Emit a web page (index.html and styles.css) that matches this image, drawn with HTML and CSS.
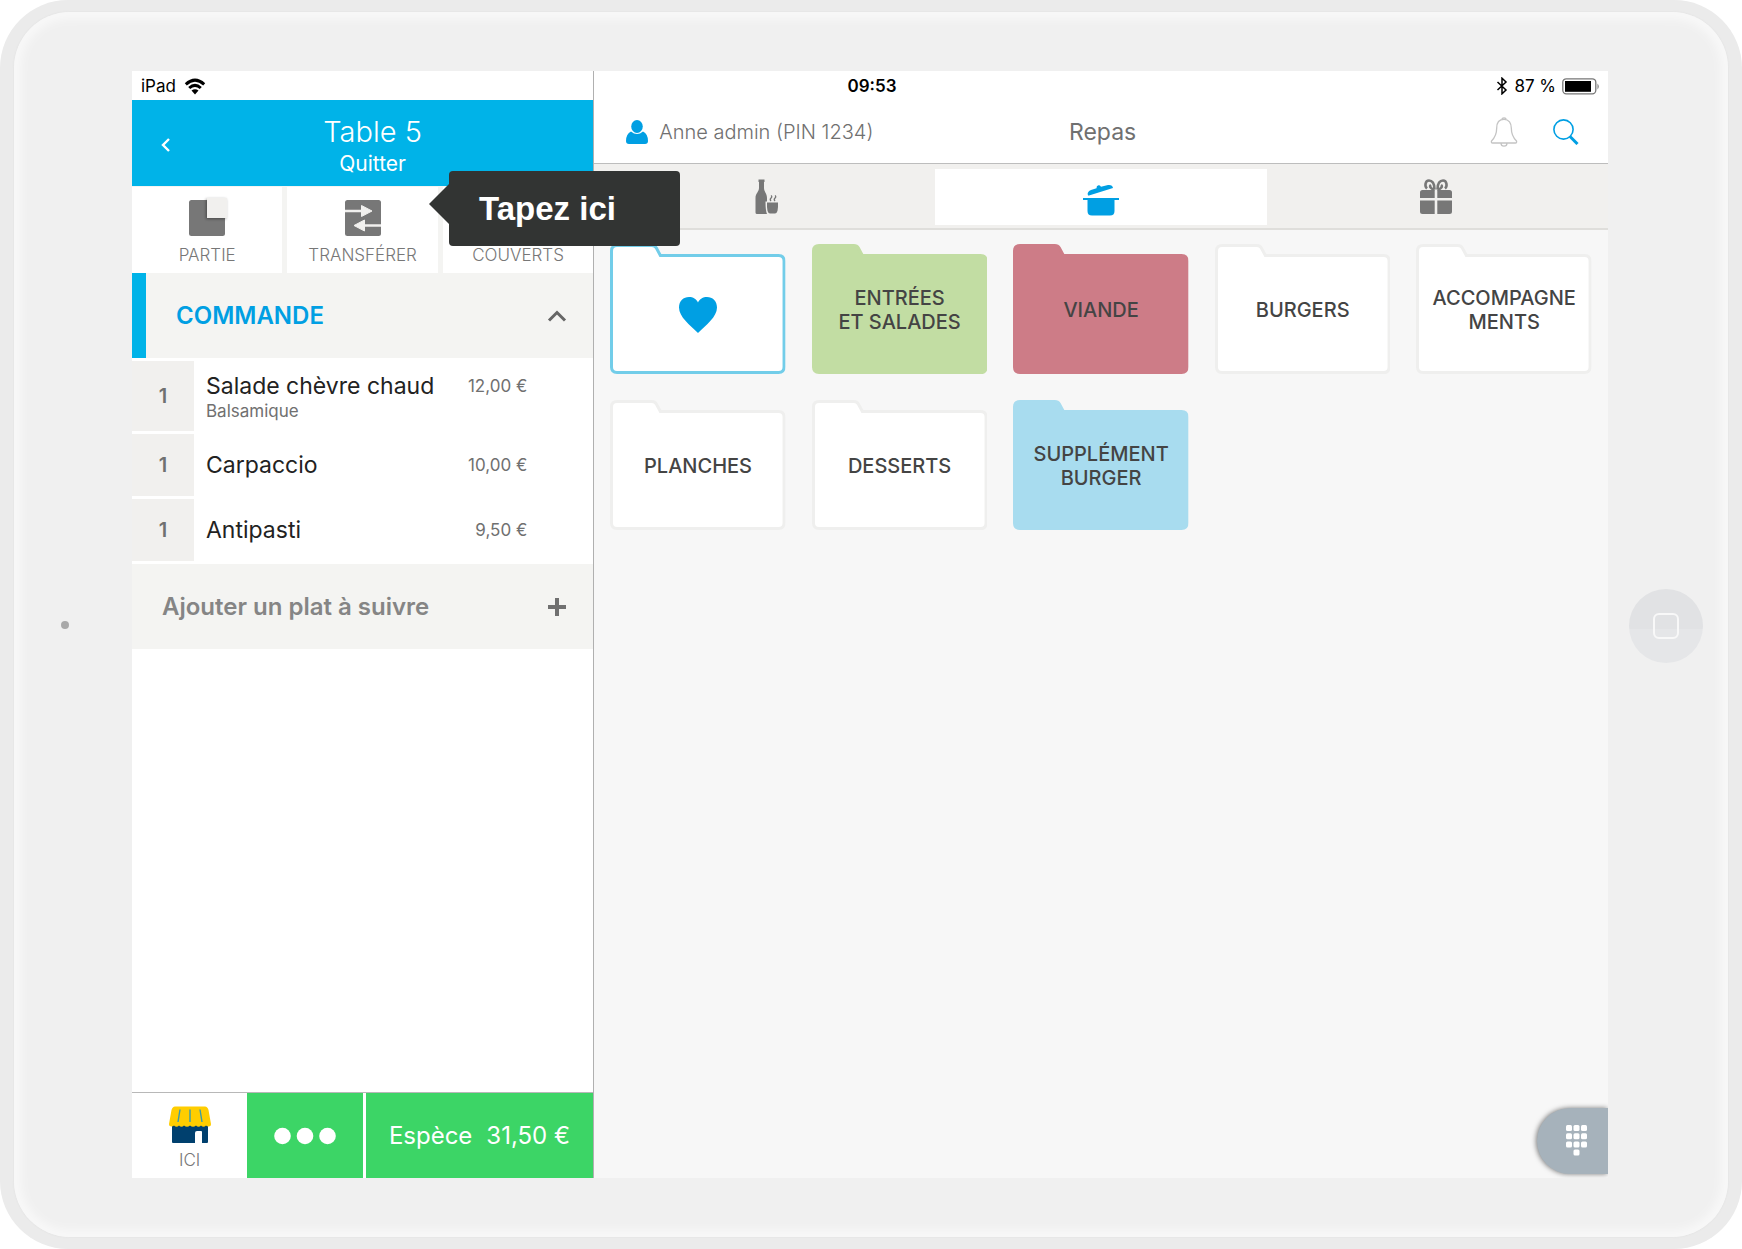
FILE: index.html
```html
<!DOCTYPE html>
<html lang="fr">
<head>
<meta charset="utf-8">
<meta name="viewport" content="width=device-width, initial-scale=1">
<title>Caisse – Table 5</title>
<link rel="stylesheet" href="styles.css">
</head>
<body>
<svg class="defs" aria-hidden="true">
  <symbol id="folder" viewBox="0 0 176 130" preserveAspectRatio="none">
    <path vector-effect="non-scaling-stroke" d="M7 1.5H42Q45 1.5 46.500 4L50.500 11.500H169Q174.500 11.500 174.500 17V123Q174.500 128.500 169 128.500H7Q1.500 128.500 1.500 123V7Q1.500 1.500 7 1.500Z"/>
  </symbol>
</svg>
<div class="device">
  <div class="body">
    <div class="bezel bezel-left"><span class="camera"></span></div>
    <main class="screen">
      <div class="status">
        <div class="status-left">iPad
          <svg width="22" height="17" viewBox="0 0 22 17" fill="none" stroke="#000" stroke-width="3"><path d="M1.800 6.300Q11-2 20.200 6.300M5.200 10Q11 4.800 16.800 10"/><path d="M11 16.500L7.500 12.600Q11 9.800 14.500 12.600Z" fill="#000" stroke="none"/></svg>
        </div>
        <time>09:53</time>
        <div class="status-right">
          <svg width="12" height="18" viewBox="0 0 12 18" fill="none" stroke="#000" stroke-width="1.500"><path d="M1.500 5L10 13L6 16.800V1.200L10 5L1.500 13"/></svg>
          <span>87 %</span>
          <svg width="38" height="17" viewBox="0 0 38 17"><rect x=".8" y=".8" width="33" height="15" rx="3.500" fill="none" stroke="#777" stroke-width="1.300"/><rect x="3" y="3" width="26" height="10.800" fill="#000"/><path d="M35.500 5.500Q38 8.500 35.500 11.500Z" fill="#777"/></svg>
        </div>
      </div>

      <section class="order">
        <header class="table-bar">
          <button class="back" aria-label="Retour"><svg width="9" height="14" viewBox="0 0 9 14" fill="none" stroke="#fff" stroke-width="2.400"><path d="M8 1L2 7L8 13"/></svg></button>
          <div class="table-name"><h1>Table 5</h1><a href="#">Quitter</a></div>
        </header>
        <div class="actions">
          <button>
            <svg width="44" height="42" viewBox="0 0 44 42"><defs><filter id="sh" x="-30%" y="-30%" width="160%" height="160%"><feDropShadow dx="-1" dy="1" stdDeviation="1.500" flood-opacity=".4"/></filter></defs><rect x="4" y="4" width="36" height="36" rx="2.500" fill="#777"/><path d="M22 2H42V22H22Z" fill="#f1f0ee" filter="url(#sh)"/></svg>
            <span>PARTIE</span>
          </button>
          <button>
            <svg width="44" height="42" viewBox="0 0 44 42"><rect x="4" y="4" width="36" height="36" rx="2.500" fill="#777"/><path d="M4 15H21M23 29.500H40" stroke="#f1f0ee" stroke-width="2.600"/><path d="M20.500 9.500L31 15L20.500 20.500ZM23.500 24L13 29.500L23.500 35Z" fill="#f1f0ee" stroke="#f1f0ee" stroke-linejoin="round"/></svg>
            <span>TRANSFÉRER</span>
          </button>
          <button>
            <svg width="44" height="42" viewBox="0 0 44 42"><path d="M12 4V16Q12 20 15 21V40H18V21Q21 20 21 16V4M27 40V4Q33 6 33 22H30V40Z" fill="#777"/></svg>
            <span>COUVERTS</span>
          </button>
        </div>
        <button class="course" aria-expanded="true">
          <span>COMMANDE</span>
          <svg width="20" height="14" viewBox="0 0 20 14" fill="none" stroke="#666" stroke-width="3"><path d="M2 11.500L10 3.500L18 11.500"/></svg>
        </button>
        <ul class="items">
          <li class="tall"><span class="qty">1</span><div class="dish">Salade chèvre chaud<small>Balsamique</small></div><span class="price">12,00 €</span></li>
          <li><span class="qty">1</span><div class="dish">Carpaccio</div><span class="price">10,00 €</span></li>
          <li><span class="qty">1</span><div class="dish">Antipasti</div><span class="price">9,50 €</span></li>
        </ul>
        <button class="course add">
          <span>Ajouter un plat à suivre</span>
          <svg width="20" height="20" viewBox="0 0 20 20" stroke="#707070" stroke-width="4"><path d="M10 1V19M1 10H19"/></svg>
        </button>
        <footer class="pay">
          <button class="place">
            <svg width="42" height="38" viewBox="0 0 42 38"><path d="M3 18H39V36Q39 37 38 37H33V26Q33 25 32 25H28Q26 25 26 27V37H4Q3 37 3 36Z" fill="#00406e"/><path d="M6 .5H36Q38.500 .5 39.500 4L42 18Q42 20.500 39.500 20.500Q38 20.500 37 19.500Q34.500 22 32 19.500Q29.500 22 27 19.500Q24 22 21 19.500Q18 22 15 19.500Q12.500 22 10 19.500Q7.500 22 5 19.500Q4 20.500 2.500 20.500Q0 20.500 0 18L2.500 4Q3.500 .5 6 .5Z" fill="#ffcd00"/><path d="M11 3.500L9 16M21 3.500V16M31 3.500L33 16" stroke="#3a9ba8" stroke-width="1.400"/></svg>
            <span>ICI</span>
          </button>
          <button class="more" aria-label="Plus"><svg width="62" height="18" viewBox="0 0 62 18" fill="#fff"><circle cx="8.500" cy="9" r="8.300"/><circle cx="31" cy="9" r="8.300"/><circle cx="53.500" cy="9" r="8.300"/></svg></button>
          <button class="cash"><span>Espèce</span><span>31,50 €</span></button>
        </footer>
        <div class="hint" role="tooltip">Tapez ici</div>
      </section>

      <section class="catalog">
        <header class="top">
          <a class="user" href="#">
            <svg width="22" height="24" viewBox="0 0 22 24" fill="#009fe3"><ellipse cx="11" cy="6.500" rx="5.800" ry="6.400"/><path d="M5 11.500Q11 16.500 17 11.500Q22 14 22 21Q22 24 19 24H3Q0 24 0 21Q0 14 5 11.500Z"/></svg>
            Anne admin (PIN 1234)</a>
          <h2>Repas</h2>
          <div class="tools">
            <button aria-label="Notifications"><svg width="28" height="30" viewBox="0 0 28 30" fill="none" stroke="#c4c4c4" stroke-width="1.300"><path d="M14 2.300C9 2.300 6.700 6 6.700 11C6.700 18 4.500 21 1.500 24Q1 26 2.500 26H25.500Q27 26 26.500 24C23.500 21 21.300 18 21.300 11C21.300 6 19 2.300 14 2.300ZM12 2.500Q12 .8 14 .8Q16 .8 16 2.500M11 26Q11 29.200 14 29.200Q17 29.200 17 26"/></svg></button>
            <button aria-label="Rechercher"><svg width="26" height="26" viewBox="0 0 26 26" fill="none" stroke="#009fe3"><circle cx="10.500" cy="10.500" r="9.600" stroke-width="1.600"/><path d="M17 17.500L24.500 25" stroke-width="3"/></svg></button>
          </div>
        </header>
        <nav class="tabs">
          <button aria-label="Boissons"><svg width="26" height="38" viewBox="0 0 26 38" fill="#777"><path d="M4.500 1.500H10.500V4H10V10C10 14 13 15 13 20V23.500H11.500Q11.500 33 13 36H3Q1.500 36 1.500 34.500V20C1.500 15 5 14 5 10V4H4.500Z"/><path d="M13 24.500H24Q24.500 35.500 21 35.500H16Q12.500 35.500 13 24.500Z"/><path d="M17 23Q15.500 21.500 17 20T17 17.500M21 23Q19.500 21.500 21 20T21 17.500" fill="none" stroke="#777" stroke-width="1.300"/></svg></button>
          <button class="on" aria-label="Repas"><svg width="36" height="32" viewBox="0 0 36 32" fill="#009fe3"><path d="M0 14H36V16H31.500V27Q31.500 31.500 27 31.500H9Q4.500 31.500 4.500 27V16H0Z"/><path d="M5 11.500Q3.500 8 8 6L13.500 4.300Q13.500 1.500 15 1.500Q16.500 .8 18 2.700L25 1Q29.500 .5 30 4L6 11.500Z"/></svg></button>
          <button aria-label="Cadeaux"><svg width="34" height="38" viewBox="0 0 34 38" fill="#777"><path d="M3.500 12H15.700V20H1V14.500Q1 12 3.500 12ZM18.300 12H30.500Q33 12 33 14.500V20H18.300ZM1 22.500H15.700V36H3.500Q1 36 1 33.500ZM18.300 22.500H33V33.500Q33 36 30.500 36H18.300Z"/><path d="M15.500 11.500C15.500 5 13 2.500 10 2.500C6 2.500 5.500 8.500 8 10.500M18.500 11.500C18.500 5 21 2.500 24 2.500C28 2.500 28.500 8.500 26 10.500M15.500 11.500C11 11 10.500 8 12 7M18.500 11.500C23 11 23.500 8 22 7" fill="none" stroke="#777" stroke-width="2.600"/></svg></button>
        </nav>
        <div class="folders">
          <button class="folder fav" aria-label="Favoris"><svg class="shape"><use href="#folder"/></svg><svg class="heart" width="38" height="36" viewBox="0 0 38 36"><path d="M19 36C11 28 0 20 0 10.500C0 4 4.500 0 10 0C14 0 17.500 2 19 5.500C20.500 2 24 0 28 0C33.500 0 38 4 38 10.500C38 20 27 28 19 36Z" fill="#009fe3"/></svg></button>
          <button class="folder green"><svg class="shape"><use href="#folder"/></svg><span>ENTRÉES<br>ET SALADES</span></button>
          <button class="folder red"><svg class="shape"><use href="#folder"/></svg><span>VIANDE</span></button>
          <button class="folder"><svg class="shape"><use href="#folder"/></svg><span>BURGERS</span></button>
          <button class="folder"><svg class="shape"><use href="#folder"/></svg><span>ACCOMPAGNE<br>MENTS</span></button>
          <button class="folder"><svg class="shape"><use href="#folder"/></svg><span>PLANCHES</span></button>
          <button class="folder"><svg class="shape"><use href="#folder"/></svg><span>DESSERTS</span></button>
          <button class="folder blue"><svg class="shape"><use href="#folder"/></svg><span>SUPPLÉMENT<br>BURGER</span></button>
        </div>
        <button class="keypad" aria-label="Clavier"><svg width="22" height="32" viewBox="0 0 22 32" fill="#fff"><rect width="6" height="6" rx="1.500"/><rect x="7.500" width="6" height="6" rx="1.500"/><rect x="15" width="6" height="6" rx="1.500"/><rect y="8.200" width="6" height="6" rx="1.500"/><rect x="7.500" y="8.200" width="6" height="6" rx="1.500"/><rect x="15" y="8.200" width="6" height="6" rx="1.500"/><rect y="16.400" width="6" height="6" rx="1.500"/><rect x="7.500" y="16.400" width="6" height="6" rx="1.500"/><rect x="15" y="16.400" width="6" height="6" rx="1.500"/><rect x="7.500" y="24.600" width="6" height="6" rx="1.500"/></svg></button>
      </section>
    </main>
    <div class="bezel bezel-right"><button class="home" aria-label="Accueil"><span></span></button></div>
  </div>
</div>
</body>
</html>
```
FILE: styles.css
```css
* { box-sizing: border-box; }
body { margin: 0; background: #fff; font-family: Inter, "Liberation Sans", sans-serif; color: #222; }
button { border: 0; padding: 0; margin: 0; background: none; font: inherit; color: inherit; cursor: pointer; }
a { color: inherit; text-decoration: none; }
h1, h2 { margin: 0; font-weight: 400; }
svg { display: block; flex: none; }
.defs { position: absolute; width: 0; height: 0; }

/* Tablet shell */
.device { min-height: 100vh; display: flex; padding: 12px 14px; border-radius: 68px; background: #ebebeb; }
.body { flex: 1; display: flex; padding: 59px 0; border-radius: 56px; background: #f0f0f0; box-shadow: inset 0 0 8px 7px #f8f8f8, 0 0 2px #ddd; }
.bezel { display: flex; align-items: center; justify-content: center; }
.bezel-left { flex: 0 0 118px; padding-right: 16px; }
.bezel-right { flex: 0 0 120px; padding: 2px 4px 0 0; }
.camera { width: 8px; height: 8px; border-radius: 50%; background: #a9a9a9; }
.home { display: grid; place-items: center; width: 74px; height: 74px; border-radius: 50%; background: linear-gradient(#e1e2e4 54%, #e5e6e8 54%); }
.home span { width: 26px; height: 26px; border: 2px solid #f8f8f8; border-radius: 6px; }

.screen { flex: 1; min-width: 0; display: grid; grid-template: 29px 1fr / 5fr 11fr; background: #fff; overflow: hidden; }

/* iOS status bar */
.status { grid-area: 1 / 1 / 2 / 3; z-index: 1; display: grid; grid-template-columns: 1fr auto 1fr; align-items: center; padding: 1px 8px 0 9px; font-size: 17px; line-height: 28px; color: #000; }
.status time { padding-left: 3px; font-weight: 600; }
.status-left, .status-right { display: flex; align-items: center; gap: 8px; }
.status-right { justify-content: flex-end; gap: 6px; }

/* Order column */
.order { grid-area: 2 / 1 / 3 / 2; position: relative; display: flex; flex-direction: column; }
.table-bar { display: flex; align-items: center; height: 86px; background: #00b3e8; color: #fff; }
.back { flex: 0 0 66px; height: 86px; padding-top: 3px; display: grid; place-items: center; }
.table-name { flex: 1; padding: 6px 46px 0 0; text-align: center; }
.table-name h1 { font-size: 29px; line-height: 36px; font-weight: 300; }
.table-name a { display: block; font-size: 21px; line-height: 28px; }
.actions { display: grid; grid-template-columns: repeat(3, 1fr); gap: 5px; padding-top: 1px; background: #f4f4f2; }
.actions button { display: flex; flex-direction: column; align-items: center; height: 86px; padding-top: 9px; background: #fff; color: #777; font-size: 17px; line-height: 24px; font-weight: 300; }
.actions span { margin-top: 5px; }
.course { display: flex; align-items: center; justify-content: space-between; height: 85px; padding: 0 26px 0 30px; border-left: 14px solid #00b3e8; background: #f4f4f2; color: #009fe3; font-size: 24px; font-weight: 600; }
.add { padding-left: 30px; border-left: 0; color: #858585; }
.items { list-style: none; margin: 0; padding: 3px 0; display: grid; gap: 3px; }
.items li { display: flex; align-items: center; min-height: 62px; }
.qty { flex: 0 0 62px; align-self: stretch; display: grid; place-items: center; background: #f1f0ee; color: #707070; font-size: 20px; font-weight: 600; }
.dish { flex: 1; padding-left: 12px; font-size: 23px; line-height: 28px; }
.dish small { display: block; color: #707070; font-size: 17px; line-height: 22px; }
.price { padding-right: 66px; color: #707070; font-size: 17px; line-height: 28px; }
.items .tall { min-height: 70px; }
.tall .dish, .tall .price { align-self: flex-start; padding-top: 11px; }
.pay { margin-top: auto; display: grid; grid-template-columns: 1fr 1fr 2fr; height: 86px; border-top: 1px solid #b8b8b8; }
.place { display: flex; flex-direction: column; align-items: center; justify-content: center; padding-top: 7px; color: #777; font-size: 17px; line-height: 24px; font-weight: 300; }
.place span { margin-top: 4px; }
.more { display: grid; place-items: center; background: #3cd566; }
.cash { display: flex; align-items: center; justify-content: center; gap: 14px; border-left: 3px solid #fff; background: #3cd566; color: #fff; font-size: 24px; font-weight: 400; }

/* Coach mark laid over the actions */
.hint { position: absolute; z-index: 5; left: 317px; top: 71px; width: 231px; height: 75px; padding-left: 30px; border-radius: 4px; background: #323433; color: #fff; font: 700 33px/75px "Liberation Sans", Arial, sans-serif; }
.hint::before { content: ""; position: absolute; right: 100%; top: 13px; border: solid transparent; border-width: 20px 20px 20px 0; border-right-color: #323433; }

/* Catalogue column */
.catalog { grid-area: 1 / 2 / 3 / 3; display: flex; flex-direction: column; padding-top: 29px; border-left: 1px solid #b0b0b0; background: linear-gradient(#fff 29px, #f7f7f7 29px); }
.top { display: grid; grid-template-columns: 1fr auto 1fr; align-items: center; height: 64px; padding: 0 29px 0 32px; border-bottom: 1px solid #bdbdbd; background: #fff; color: #707070; }
.user { display: flex; align-items: center; gap: 11px; font-size: 20px; font-weight: 300; }
.top h2 { font-size: 23px; }
.tools { display: flex; align-items: center; justify-content: flex-end; gap: 35px; }
.tabs { display: grid; grid-template-columns: repeat(3, 1fr); gap: 2px; height: 66px; padding: 5px 6px 3px; border-bottom: 2px solid #dfdedb; background: #f1f0ee; }
.tabs button { display: grid; place-items: center; }
.tabs .on { background: #fff; padding-top: 5px; }
.folders { display: grid; grid-template-columns: repeat(5, 1fr); gap: 26px; padding: 14px 16px; }
.folder { display: grid; place-items: center; height: 130px; color: #444; font-size: 20px; line-height: 24px; font-weight: 500; }
.folder > * { grid-area: 1 / 1; }
.folder span { z-index: 1; padding-top: 2px; }
.shape { width: 100%; height: 130px; fill: #fff; stroke: #efefee; stroke-width: 3px; }
.heart { z-index: 1; margin-top: 11px; }
.fav .shape { stroke: #72cde9; }
.green .shape { fill: #c2dda3; stroke: #c2dda3; }
.red .shape { fill: #cd7c87; stroke: #cd7c87; }
.blue .shape { fill: #a8dcef; stroke: #a8dcef; }
.keypad { display: flex; align-items: center; justify-content: center; align-self: flex-end; width: 71px; height: 66px; margin: auto 0 4px; padding-left: 9px; border-radius: 33px 0 0 33px; background: #a6b2bb; box-shadow: -1px 0 5px rgba(0, 0, 0, .5); }
```
